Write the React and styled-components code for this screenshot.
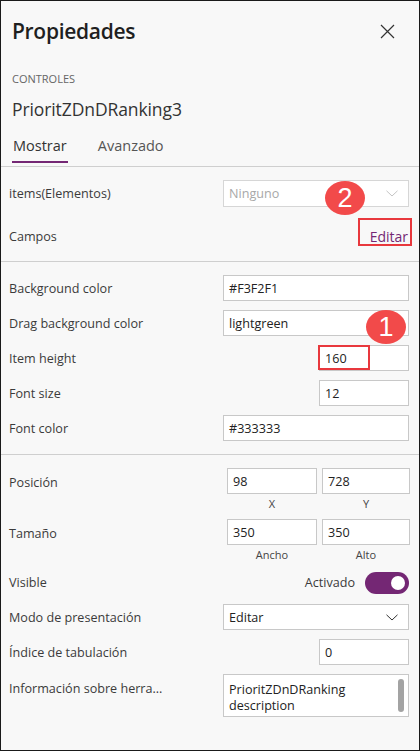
import React from "react";
import styled, { createGlobalStyle } from "styled-components";

const Global = createGlobalStyle`
  html, body { margin: 0; padding: 0; background: #f8f8f8; }
  * { box-sizing: border-box; }
`;

const Panel = styled.div`
  position: relative;
  width: 420px;
  height: 751px;
  border: 1px solid #1a1a1a;
  background: #f8f8f8;
  font-family: "Open Sans", "Noto Sans", sans-serif;
  color: #333;
  overflow: hidden;
`;

const Header = styled.div`
  padding: 13px 0 0 11px;
`;

const TitleBar = styled.div`
  display: flex;
  align-items: center;
  justify-content: space-between;
  height: 34px;
  padding-right: 24px;
`;

const Title = styled.h1`
  margin: 0;
  font-size: 21px;
  font-weight: 600;
  color: #1f1f1f;
  letter-spacing: -0.3px;
`;

const CloseButton = styled.button`
  border: 0;
  background: transparent;
  padding: 0;
  width: 16px;
  height: 16px;
  display: flex;
  align-items: center;
  justify-content: center;
`;

const Caption = styled.div`
  margin-top: 23px;
  font-size: 11px;
  color: #666;
`;

const ControlName = styled.div`
  margin-top: 11px;
  font-size: 17.5px;
  color: #333;
  letter-spacing: -0.1px;
`;

const Tabs = styled.div`
  display: flex;
  gap: 29px;
  margin-top: 15px;
`;

const Tab = styled.div`
  font-size: 14.5px;
  color: ${(p) => (p.$active ? "#333" : "#555")};
  padding: 0 1px 6px;
  border-bottom: 2px solid ${(p) => (p.$active ? "#742774" : "transparent")};
`;

const Section = styled.div`
  position: relative;
  border-top: 1px solid #cfcfcf;
  margin-top: ${(p) => p.$mt || "0"};
  padding: ${(p) => p.$pad || "13px 10px 13px 8px"};
  display: flex;
  flex-direction: column;
  gap: ${(p) => p.$gap || "9px"};
`;

const Row = styled.div`
  position: relative;
  display: flex;
  align-items: ${(p) => (p.$top ? "flex-start" : "center")};
  justify-content: space-between;
  min-height: ${(p) => p.$h || "26px"};
`;

const Label = styled.div`
  font-size: 12.6px;
  color: #3b3b3b;
  padding-top: ${(p) => (p.$top ? "6px" : "0")};
`;

const Input = styled.div`
  width: ${(p) => p.$w || "186px"};
  height: ${(p) => p.$h || "26px"};
  border: 1px solid #c8c8c8;
  background: #fff;
  font-size: 12.6px;
  color: #222;
  padding: 0 5px;
  display: flex;
  align-items: center;
`;

const Select = styled(Input)`
  justify-content: space-between;
  color: ${(p) => (p.$disabled ? "#a8a8a8" : "#222")};
  border-color: ${(p) => (p.$disabled ? "#d6d6d6" : "#c8c8c8")};
  padding-right: 10px;
`;

const LinkText = styled.span`
  font-size: 14px;
  color: #742774;
  padding-right: 1px;
`;

const PairWrap = styled.div`
  display: grid;
  grid-template-columns: 90px 88px;
  column-gap: 5px;
  margin-right: -1px;
`;

const SubLabel = styled.div`
  text-align: center;
  font-size: 11px;
  color: #444;
  height: 16px;
  line-height: 20px;
`;

const ToggleGroup = styled.div`
  display: flex;
  align-items: center;
  gap: 10px;
  font-size: 12.6px;
  color: #3b3b3b;
`;

const Toggle = styled.div`
  width: 44px;
  height: 22px;
  border-radius: 11px;
  background: #742774;
  position: relative;
  &::after {
    content: "";
    position: absolute;
    right: 4px;
    top: 4px;
    width: 14px;
    height: 14px;
    border-radius: 50%;
    background: #fff;
  }
`;

const TextArea = styled.div`
  position: relative;
  width: 186px;
  height: 43px;
  border: 1px solid #c8c8c8;
  background: #fff;
  font-size: 12.6px;
  line-height: 16px;
  color: #222;
  padding: 7px 20px 0 5px;
`;

const Thumb = styled.div`
  position: absolute;
  right: 4px;
  top: 4px;
  width: 6px;
  height: 33px;
  border-radius: 3px;
  background: #a3a3a3;
`;

const Badge = styled.div`
  position: absolute;
  width: 40px;
  height: 34px;
  border-radius: 50%;
  background: #f24a4a;
  color: #fff;
  font-family: "Liberation Sans", Arial, sans-serif;
  font-size: 27px;
  display: flex;
  align-items: center;
  justify-content: center;
  z-index: 2;
  left: ${(p) => p.$x}px;
  top: ${(p) => p.$y}px;
`;

const Highlight = styled.div`
  position: absolute;
  border: 2px solid #e8383d;
  z-index: 2;
  left: ${(p) => p.$x}px;
  top: ${(p) => p.$y}px;
  width: ${(p) => p.$w}px;
  height: ${(p) => p.$h}px;
`;

const Chevron = ({ color = "#333" }) => (
  <svg width="12" height="7" viewBox="0 0 12 7">
    <path d="M0.5 0.8 L6 6 L11.5 0.8" fill="none" stroke={color} strokeWidth="1" />
  </svg>
);

const CloseIcon = () => (
  <svg width="15" height="15" viewBox="0 0 15 15">
    <path d="M1 1 L14 14 M14 1 L1 14" stroke="#333" strokeWidth="1.2" fill="none" />
  </svg>
);

export default function App() {
  return (
    <>
      <Global />
      <Panel>
        <Header>
          <TitleBar>
            <Title>Propiedades</Title>
            <CloseButton aria-label="Cerrar">
              <CloseIcon />
            </CloseButton>
          </TitleBar>
          <Caption>CONTROLES</Caption>
          <ControlName>PrioritZDnDRanking3</ControlName>
          <Tabs>
            <Tab $active>Mostrar</Tab>
            <Tab>Avanzado</Tab>
          </Tabs>
        </Header>

        <Section $mt="3px" $pad="13px 10px 12px 8px" $gap="16px">
          <Row>
            <Label>items(Elementos)</Label>
            <Select $disabled $h="27px">
              <span>Ninguno</span>
              <Chevron color="#c4c4c4" />
            </Select>
          </Row>
          <Row>
            <Label>Campos</Label>
            <LinkText>Editar</LinkText>
            <Highlight $x={349} $y={-5} $w={54} $h={28} />
            <Badge $x={316} $y={-42}>2</Badge>
          </Row>
        </Section>

        <Section>
          <Row>
            <Label>Background color</Label>
            <Input>#F3F2F1</Input>
          </Row>
          <Row>
            <Label>Drag background color</Label>
            <Input>lightgreen</Input>
            <Badge $x={357} $y={0}>1</Badge>
          </Row>
          <Row>
            <Label>Item height</Label>
            <Input $w="90px">160</Input>
            <Highlight $x={309} $y={0} $w={52} $h={25} />
          </Row>
          <Row>
            <Label>Font size</Label>
            <Input $w="90px">12</Input>
          </Row>
          <Row>
            <Label>Font color</Label>
            <Input>#333333</Input>
          </Row>
        </Section>

        <Section>
          <Row $top>
            <Label $top>Posición</Label>
            <PairWrap>
              <Input $w="100%">98</Input>
              <Input $w="100%">728</Input>
              <SubLabel>X</SubLabel>
              <SubLabel>Y</SubLabel>
            </PairWrap>
          </Row>
          <Row $top>
            <Label $top>Tamaño</Label>
            <PairWrap>
              <Input $w="100%">350</Input>
              <Input $w="100%">350</Input>
              <SubLabel>Ancho</SubLabel>
              <SubLabel>Alto</SubLabel>
            </PairWrap>
          </Row>
          <Row $h="25px">
            <Label>Visible</Label>
            <ToggleGroup>
              Activado
              <Toggle />
            </ToggleGroup>
          </Row>
          <Row>
            <Label>Modo de presentación</Label>
            <Select>
              <span>Editar</span>
              <Chevron />
            </Select>
          </Row>
          <Row>
            <Label>Índice de tabulación</Label>
            <Input $w="90px">0</Input>
          </Row>
          <Row $top>
            <Label $top>Información sobre herra...</Label>
            <TextArea>
              PrioritZDnDRanking description
              <Thumb />
            </TextArea>
          </Row>
        </Section>
      </Panel>
    </>
  );
}
